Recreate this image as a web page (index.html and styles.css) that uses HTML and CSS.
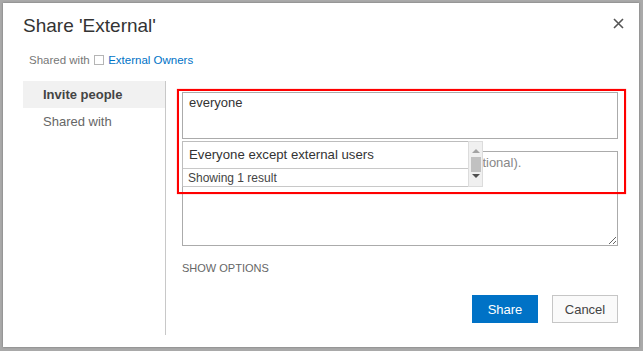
FILE: index.html
```html
<!DOCTYPE html>
<html lang="en">
<head>
    <meta charset="UTF-8">
    <meta name="viewport" content="width=device-width, initial-scale=1.0">
    <title>Share 'External'</title>
    <link rel="stylesheet" href="styles.css">
</head>
<body>
    <div class="dialog">
        <div class="dialog-head">
            <h1 class="dialog-title">Share 'External'</h1>
            <button class="close-btn" aria-label="Close">
                <svg width="11" height="11" viewBox="0 0 11 11">
                    <path d="M1 1 L10 10 M10 1 L1 10" stroke="#555" stroke-width="1.6" fill="none"/>
                </svg>
            </button>
        </div>
        <div class="shared-line">
            Shared with <span class="check"></span> <a href="#" class="link">External Owners</a>
        </div>
        <div class="dialog-body">
            <ul class="side-nav">
                <li class="nav-item active">Invite people</li>
                <li class="nav-item">Shared with</li>
            </ul>
            <div class="invite-pane">
                <div class="picker">
                    <div class="people-input">everyone</div>
                    <!-- autocomplete list over the message box -->
                    <div class="suggest">
                        <div class="suggest-list">
                            <div class="suggest-item">Everyone except external users</div>
                            <div class="suggest-count">Showing 1 result</div>
                        </div>
                        <div class="scrollbar">
                            <span class="arrow arrow-up"></span>
                            <span class="thumb"></span>
                            <span class="arrow arrow-down"></span>
                        </div>
                    </div>
                </div>
                <textarea class="message" placeholder="Include a personal message with this invitation (Optional)."></textarea>
                <div class="show-options">SHOW OPTIONS</div>
                <div class="actions">
                    <button class="btn btn-primary">Share</button>
                    <button class="btn">Cancel</button>
                </div>
            </div>
        </div>
        <div class="highlight"></div>
    </div>
</body>
</html>
```

FILE: styles.css
```css
html, body {
    margin: 0;
    padding: 0;
}

body {
    background: #a9a9a9;
    font-family: "Liberation Sans", Arial, sans-serif;
    color: #333;
    width: 643px;
    height: 351px;
    overflow: hidden;
}

.dialog {
    position: relative;
    box-sizing: border-box;
    width: 636px;
    height: 344px;
    margin: 3px 4px 4px 3px;
    padding: 10px 21px 12px 20px;
    background: #fff;
    box-shadow: 0 0 2px rgba(0, 0, 0, 0.35);
}

.dialog-head {
    display: flex;
    justify-content: space-between;
    align-items: flex-start;
}

.dialog-title {
    margin: 0;
    font-size: 19px;
    line-height: 26px;
    font-weight: normal;
    color: #333;
}

.close-btn {
    border: none;
    background: none;
    padding: 0;
    margin: 5px -6px 0 0;
    width: 11px;
    height: 11px;
    cursor: pointer;
}

.close-btn svg {
    display: block;
}

.shared-line {
    margin-top: 13px;
    padding-left: 6px;
    font-size: 11.5px;
    line-height: 16px;
    color: #777;
}

.check {
    display: inline-block;
    box-sizing: border-box;
    width: 10px;
    height: 10px;
    border: 1px solid #b5b5b5;
    vertical-align: -1px;
    margin: 0 1px 0 1px;
}

.link {
    color: #0072c6;
    text-decoration: none;
}

.dialog-body {
    display: flex;
    margin-top: 13px;
    height: 254px;
}

.side-nav {
    list-style: none;
    margin: 0;
    padding: 0;
    width: 142px;
    border-right: 1px solid #c8c8c8;
}

.nav-item {
    height: 27px;
    line-height: 27px;
    padding-left: 20px;
    font-size: 13px;
    color: #666;
}

.nav-item.active {
    background: #f1f1f1;
    font-weight: bold;
    color: #444;
}

.invite-pane {
    flex: 1;
    display: flex;
    flex-direction: column;
    padding: 11px 0 0 16px;
}

.picker {
    position: relative;
}

.people-input {
    box-sizing: border-box;
    height: 47px;
    border: 1px solid #ababab;
    padding: 2px 6px;
    font-size: 13px;
    line-height: 16px;
    color: #333;
}

.suggest {
    position: absolute;
    top: 49px;
    left: 0;
    width: 301px;
    height: 46px;
    box-sizing: border-box;
    display: flex;
    background: #fff;
    border: 1px solid #bdbdbd;
    border-right: none;
    z-index: 2;
}

.suggest-list {
    flex: 1;
}

.suggest-item {
    height: 26px;
    line-height: 25px;
    padding-left: 6px;
    font-size: 13.2px;
    color: #333;
    border-bottom: 1px solid #c8c8c8;
}

.suggest-count {
    height: 17px;
    line-height: 18px;
    padding-left: 5px;
    font-size: 12px;
    color: #444;
    border-bottom: 1px solid #c8c8c8;
}

.scrollbar {
    position: relative;
    width: 15px;
    margin-top: -1px;
    margin-bottom: -1px;
    background: #f0f0f0;
    border: 1px solid #dcdcdc;
    box-sizing: border-box;
}

.thumb {
    position: absolute;
    left: 2px;
    top: 15px;
    width: 10px;
    height: 15px;
    background: #c1c1c1;
}

.arrow {
    position: absolute;
    left: 3px;
    width: 0;
    height: 0;
    border-left: 4px solid transparent;
    border-right: 4px solid transparent;
}

.arrow-up {
    top: 7px;
    border-bottom: 4px solid #a3a3a3;
}

.arrow-down {
    bottom: 8px;
    border-top: 4px solid #505050;
}

.message {
    box-sizing: border-box;
    display: block;
    margin-top: 12px;
    width: 100%;
    height: 95px;
    border: 1px solid #ababab;
    padding: 3px 6px;
    font-family: "Liberation Sans", Arial, sans-serif;
    font-size: 13px;
    line-height: 16px;
    color: #333;
    resize: both;
    outline: none;
}

.message::placeholder {
    color: #888;
}

.show-options {
    margin-top: 15px;
    font-size: 11px;
    line-height: 14px;
    color: #666;
}

.actions {
    display: flex;
    justify-content: flex-end;
    gap: 14px;
    margin-top: 20px;
}

.btn {
    box-sizing: border-box;
    width: 66px;
    height: 28px;
    border: 1px solid #c6c6c6;
    background: #fafafa;
    font-family: "Liberation Sans", Arial, sans-serif;
    font-size: 13px;
    color: #444;
    cursor: pointer;
}

.btn-primary {
    background: #0072c6;
    border-color: #0072c6;
    color: #fff;
}

.highlight {
    position: absolute;
    left: 174px;
    top: 86px;
    width: 449px;
    height: 105px;
    box-sizing: border-box;
    border: 2px solid #f00;
    box-shadow: 0 0 1px rgba(255, 0, 0, 0.6);
    pointer-events: none;
}
```
